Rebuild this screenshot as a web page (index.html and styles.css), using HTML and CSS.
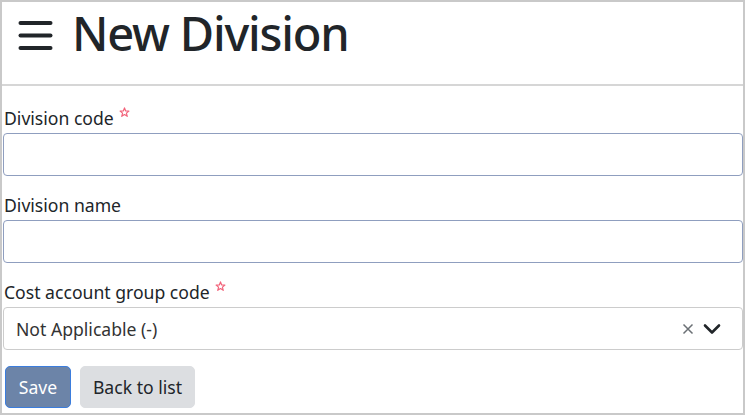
FILE: index.html
```html
<!DOCTYPE html>
<html>
<head>
<meta charset="utf-8">
<link rel="stylesheet" href="styles.css">
</head>
<body>
<div class="frame">
  <header class="header">
    <svg class="menu" width="35" height="31" viewBox="0 0 35 31">
      <line x1="2.5" y1="3" x2="32.5" y2="3" stroke="#212529" stroke-width="4" stroke-linecap="round"/>
      <line x1="2.5" y1="15.5" x2="32.5" y2="15.5" stroke="#212529" stroke-width="4" stroke-linecap="round"/>
      <line x1="2.5" y1="28" x2="32.5" y2="28" stroke="#212529" stroke-width="4" stroke-linecap="round"/>
    </svg>
    <h1 class="title">New Division</h1>
  </header>
  <form class="form">
    <div class="field">
      <label class="label">Division code <svg class="req" width="11" height="11" viewBox="0 0 12 12"><path d="M6 1 L7.3 4.3 L10.8 4.5 L8.1 6.7 L9 10.2 L6 8.2 L3 10.2 L3.9 6.7 L1.2 4.5 L4.7 4.3 Z" fill="none" stroke="#f2637a" stroke-width="1.3" stroke-linejoin="round"/></svg></label>
      <input class="input" type="text">
    </div>
    <div class="field">
      <label class="label">Division name</label>
      <input class="input" type="text">
    </div>
    <div class="field">
      <label class="label">Cost account group code <svg class="req" width="11" height="11" viewBox="0 0 12 12"><path d="M6 1 L7.3 4.3 L10.8 4.5 L8.1 6.7 L9 10.2 L6 8.2 L3 10.2 L3.9 6.7 L1.2 4.5 L4.7 4.3 Z" fill="none" stroke="#f2637a" stroke-width="1.3" stroke-linejoin="round"/></svg></label>
      <div class="select">
        <span class="select-value">Not Applicable (-)</span>
        <span class="select-icons">
          <svg width="12" height="12" viewBox="0 0 12 12"><path d="M1.5 1.5 L10.5 10.5 M10.5 1.5 L1.5 10.5" stroke="#6b7075" stroke-width="1.5" fill="none"/></svg>
          <svg width="18" height="12" viewBox="0 0 18 12"><path d="M2 2.5 L9 9.5 L16 2.5" stroke="#212529" stroke-width="2.6" fill="none" stroke-linecap="round" stroke-linejoin="round"/></svg>
        </span>
      </div>
    </div>
    <div class="actions">
      <button type="button" class="btn btn-save">Save</button>
      <button type="button" class="btn btn-back">Back to list</button>
    </div>
  </form>
</div>
</body>
</html>
```
FILE: styles.css
```css
* { box-sizing: border-box; }
html, body { margin: 0; padding: 0; }
body {
  font-family: "Noto Sans", "Open Sans", sans-serif;
  color: #212529;
  background: #fff;
}
.frame {
  width: 745px;
  height: 415px;
  border: 2px solid #c9c9c9;
  overflow: hidden;
}
.header {
  height: 84px;
  border-bottom: 2px solid #d6d6d6;
  display: flex;
  align-items: center;
  gap: 19px;
  padding: 0 0 20px 16px;
}
.menu { display: block; flex: none; margin-top: 4px; }
.title {
  margin: 0;
  font-size: 47px;
  font-weight: 500;
  line-height: 1;
  letter-spacing: -1.2px;
}
.form {
  padding: 20px 0 0 1px;
}
.field { margin-bottom: 17px; }
.field:nth-child(3) { margin-bottom: 16px; }
.label {
  display: block;
  font-size: 17.6px;
  line-height: 24px;
  margin: 0 0 3px 1px;
  color: #212529;
}
.req {
  vertical-align: top;
  margin-left: 1px;
  position: relative;
  top: 1px;
}
.input {
  display: block;
  width: 100%;
  height: 43px;
  border: 1px solid #8f9ebf;
  border-radius: 4px;
  background: #fff;
  font: inherit;
}
.select {
  display: flex;
  align-items: center;
  justify-content: space-between;
  height: 43px;
  border: 1px solid #cccccc;
  border-radius: 4px;
  padding: 0 21px 0 12px;
  font-size: 17.6px;
}
.select-value { color: #333; }
.select-icons { display: flex; align-items: center; gap: 9px; }
.select-icons svg { display: block; }
.actions {
  display: flex;
  gap: 9px;
  padding-left: 2px;
}
.btn {
  font: inherit;
  font-size: 17.6px;
  height: 42px;
  border-radius: 5px;
  padding: 0;
  white-space: nowrap;
  cursor: pointer;
}
.btn-save {
  background: #6c84a8;
  color: #fff;
  border: 1px solid #3b7ddd;
  width: 66px;
}
.btn-back {
  background: #dcdee1;
  color: #212529;
  border: 1px solid #dcdee1;
  width: 115px;
}
```
